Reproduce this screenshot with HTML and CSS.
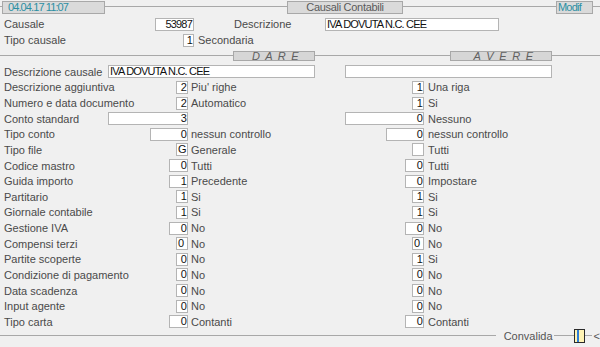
FILE: index.html
```html
<!DOCTYPE html>
<html lang="it">
<head>
    <meta charset="UTF-8">
    <title>Causali Contabili</title>
    <link rel="stylesheet" href="styles.css">
</head>
<body>

    <div class="titlebar">
        <span class="rule stub"></span>
        <span class="tab tab-date">04.04.17 11:07</span>
        <span class="rule r-date"></span>
        <span class="tab tab-title">Causali Contabili</span>
        <span class="rule r-title"></span>
        <span class="tab tab-mode">Modif</span>
        <span class="rule"></span>
    </div>

    <div class="head">
        <div class="head-row">
            <span class="head-label">Causale</span>
            <span class="fld w39">53987</span>
            <span class="head-desc">Descrizione</span>
            <span class="fld w174 left">IVA DOVUTA N.C. CEE</span>
        </div>
        <div class="head-row">
            <span class="head-label">Tipo causale</span>
            <span class="slot w39"><span class="fld w11">1</span></span>
            <span class="head-note">Secondaria</span>
        </div>
    </div>

    <div class="section-bar">
        <span class="rule r-lead"></span>
        <span class="section s-dare">D A R E</span>
        <span class="rule r-mid"></span>
        <span class="section s-avere">A V E R E</span>
        <span class="rule"></span>
    </div>

    <div class="grid">
        <span class="lbl">Descrizione causale</span>
        <span class="wide"><span class="fld w207 left">IVA DOVUTA N.C. CEE</span></span>
        <span class="wide"><span class="fld w207"></span></span>

        <span class="lbl">Descrizione aggiuntiva</span>
        <span class="in"><span class="fld w12">2</span></span>
        <span class="note">Piu' righe</span>
        <span class="in"><span class="fld w12">1</span></span>
        <span class="note note-a">Una riga</span>

        <span class="lbl">Numero e data documento</span>
        <span class="in"><span class="fld w12">2</span></span>
        <span class="note">Automatico</span>
        <span class="in"><span class="fld w12">1</span></span>
        <span class="note note-a">Si</span>

        <span class="lbl">Conto standard</span>
        <span class="in"><span class="fld w80">3</span></span>
        <span class="note"></span>
        <span class="in"><span class="fld w79">0</span></span>
        <span class="note note-a">Nessuno</span>

        <span class="lbl">Tipo conto</span>
        <span class="in"><span class="fld w38">0</span></span>
        <span class="note">nessun controllo</span>
        <span class="in"><span class="fld w38">0</span></span>
        <span class="note note-a">nessun controllo</span>

        <span class="lbl">Tipo file</span>
        <span class="in"><span class="fld w12 center">G</span></span>
        <span class="note">Generale</span>
        <span class="in"><span class="fld w12"></span></span>
        <span class="note note-a">Tutti</span>

        <span class="lbl">Codice mastro</span>
        <span class="in"><span class="fld w19">0</span></span>
        <span class="note">Tutti</span>
        <span class="in"><span class="fld w19">0</span></span>
        <span class="note note-a">Tutti</span>

        <span class="lbl">Guida importo</span>
        <span class="in"><span class="fld w19">1</span></span>
        <span class="note">Precedente</span>
        <span class="in"><span class="fld w19">0</span></span>
        <span class="note note-a">Impostare</span>

        <span class="lbl">Partitario</span>
        <span class="in"><span class="fld w12">1</span></span>
        <span class="note">Si</span>
        <span class="in"><span class="fld w12">1</span></span>
        <span class="note note-a">Si</span>

        <span class="lbl">Giornale contabile</span>
        <span class="in"><span class="fld w12">1</span></span>
        <span class="note">Si</span>
        <span class="in"><span class="fld w12">1</span></span>
        <span class="note note-a">Si</span>

        <span class="lbl">Gestione IVA</span>
        <span class="in"><span class="fld w19">0</span></span>
        <span class="note">No</span>
        <span class="in"><span class="fld w19">0</span></span>
        <span class="note note-a">No</span>

        <span class="lbl">Compensi terzi</span>
        <span class="in"><span class="fld w12 left">0</span></span>
        <span class="note">No</span>
        <span class="in"><span class="fld w12 left">0</span></span>
        <span class="note note-a">No</span>

        <span class="lbl">Partite scoperte</span>
        <span class="in"><span class="fld w12">0</span></span>
        <span class="note">No</span>
        <span class="in"><span class="fld w12">1</span></span>
        <span class="note note-a">Si</span>

        <span class="lbl">Condizione di pagamento</span>
        <span class="in"><span class="fld w12">0</span></span>
        <span class="note">No</span>
        <span class="in"><span class="fld w12">0</span></span>
        <span class="note note-a">No</span>

        <span class="lbl">Data scadenza</span>
        <span class="in"><span class="fld w12">0</span></span>
        <span class="note">No</span>
        <span class="in"><span class="fld w12">0</span></span>
        <span class="note note-a">No</span>

        <span class="lbl">Input agente</span>
        <span class="in"><span class="fld w12">0</span></span>
        <span class="note">No</span>
        <span class="in"><span class="fld w12">0</span></span>
        <span class="note note-a">No</span>

        <span class="lbl">Tipo carta</span>
        <span class="in"><span class="fld w19">0</span></span>
        <span class="note">Contanti</span>
        <span class="in"><span class="fld w19">0</span></span>
        <span class="note note-a">Contanti</span>
    </div>

    <div class="footer">
        <span class="rule"></span>
        <span class="footer-label">Convalida</span>
        <span class="rule r-short"></span>
        <svg class="ok-icon" width="11" height="14" viewBox="0 0 11 14">
            <rect x="0.5" y="0.5" width="10" height="13" fill="#fff3b3" stroke="#2a2a2a"/>
            <rect x="3" y="1" width="2" height="12" fill="#2f7fd8"/>
        </svg>
        <span class="rule r-tail"></span>
        <span class="arrow">&lt;</span>
    </div>

</body>
</html>
```

FILE: styles.css
```css
body {
    margin: 0;
    background: #f0f0f0;
    font-family: "Liberation Sans", Arial, sans-serif;
    font-size: 11px;
    color: #4a4a4a;
    width: 600px;
    height: 347px;
    overflow: hidden;
}

/* --- Horizontal rules used by the bars --- */
.rule {
    flex: 1;
    height: 0;
    border-top: 1px solid #a8a8a8;
}

/* --- Title bar --- */
.titlebar {
    display: flex;
    align-items: flex-start;
    height: 14px;
}

.titlebar .rule {
    margin-top: 6px;
}

.stub { flex: 0 0 2px; }
.r-date { flex: 0 0 182px; }
.r-title { flex: 0 0 153px; }

.tab {
    box-sizing: border-box;
    height: 13px;
    margin-top: 1px;
    border: 1px solid #a8a8a8;
    background: #dadada;
    line-height: 11px;
    white-space: nowrap;
}

.tab-date {
    width: 103px;
    padding-left: 5px;
    color: #2b8fa3;
    letter-spacing: -0.9px;
}

.tab-title {
    width: 116px;
    text-align: center;
    color: #5a5a5a;
    letter-spacing: -0.3px;
}

.tab-mode {
    width: 37px;
    padding-left: 1px;
    color: #2b8fa3;
    letter-spacing: -0.8px;
}

/* --- Header fields --- */
.head {
    padding: 2px 0 0 4px;
}

.head-row {
    display: flex;
    align-items: center;
    height: 16px;
}

.head-label {
    width: 151px;
}

.head-desc {
    width: 91px;
    margin-left: 40px;
}

.head-note {
    margin-left: 4px;
}

.slot {
    display: flex;
    justify-content: flex-end;
}

/* --- Input boxes --- */
.fld {
    box-sizing: border-box;
    display: block;
    height: 13px;
    border: 1px solid #b4b4b4;
    background: #fff;
    color: #111;
    line-height: 11px;
    text-align: right;
    padding: 0 1px;
    letter-spacing: -0.8px;
    white-space: nowrap;
    overflow: hidden;
}

.fld.left { text-align: left; }
.fld.center { text-align: center; }

.w11 { width: 11px; }
.w12 { width: 12px; }
.w19 { width: 19px; }
.w38 { width: 38px; }
.w39 { width: 39px; }
.w79 { width: 79px; }
.w80 { width: 80px; }
.w174 { width: 174px; }
.w207 { width: 207px; }

/* --- DARE / AVERE bar --- */
.section-bar {
    display: flex;
    align-items: flex-start;
    height: 10px;
    margin-top: 3px;
}

.section-bar .rule {
    margin-top: 4px;
}

.r-lead { flex: 0 0 233px; }
.r-mid { flex: 0 0 135px; }

.section {
    box-sizing: border-box;
    height: 10px;
    border: 1px solid #a8a8a8;
    background: #d6d6d6;
    color: #606060;
    font-style: italic;
    line-height: 8px;
    letter-spacing: 1.3px;
    text-align: center;
    white-space: nowrap;
}

.s-dare { width: 82px; padding-left: 4px; }
.s-avere { width: 102px; padding-left: 6px; }

/* --- Main form grid --- */
.grid {
    display: grid;
    grid-template-columns: 104px 80px 157px 79px 1fr;
    grid-auto-rows: 15.625px;
    align-items: center;
    margin-top: 3px;
    padding-left: 4px;
}

.lbl {
    white-space: nowrap;
}

.in {
    display: flex;
    justify-content: flex-end;
}

.wide {
    grid-column: span 2;
}

.note {
    padding-left: 3px;
    white-space: nowrap;
}

.note-a {
    padding-left: 4px;
}

/* --- Footer --- */
.footer {
    display: flex;
    align-items: center;
    height: 14px;
    margin-top: -1px;
}

.footer-label {
    color: #555;
    padding: 0 1px 0 8px;
}

.r-short { flex: 0 0 20px; }
.r-tail { flex: 0 0 7px; }

.ok-icon {
    display: block;
}

.arrow {
    margin-left: 2px;
    color: #555;
}
```
